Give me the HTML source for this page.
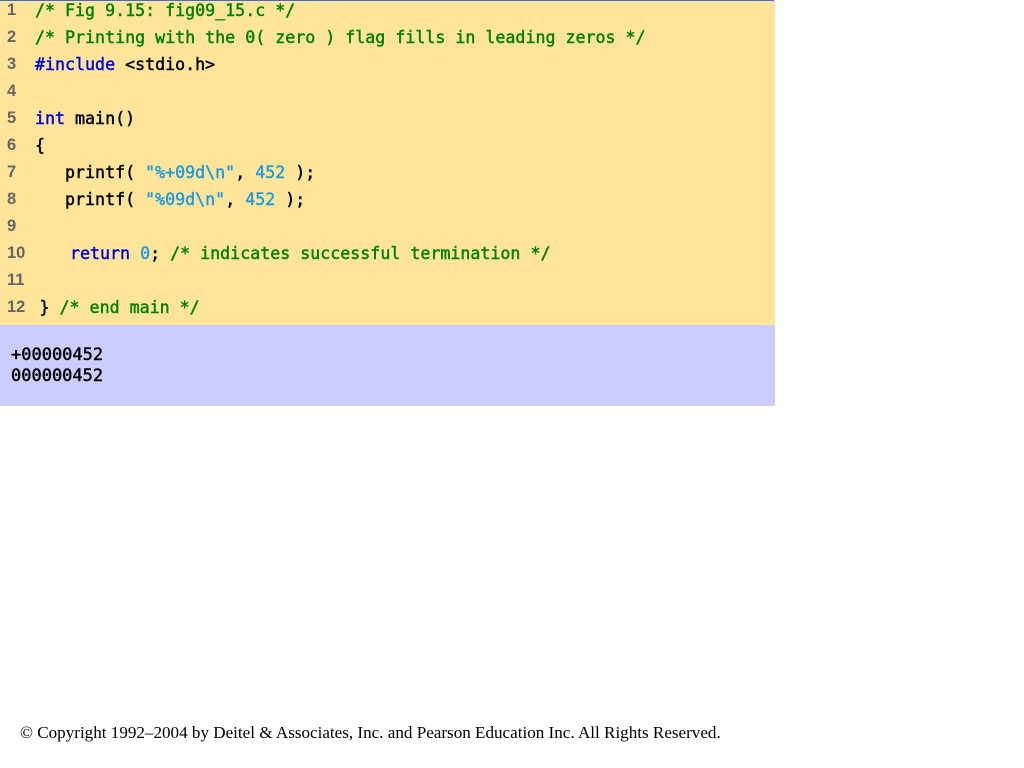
<!DOCTYPE html>
<html>
<head>
<meta charset="utf-8">
<style>
html,body{margin:0;padding:0;background:#fff;width:1024px;height:768px;overflow:hidden}
#code{position:absolute;left:0;top:0;width:775px;height:325px;background:#ffe599}
#bar{position:absolute;left:0;top:0;width:774px;height:1px;background:#4a66d0}
#out{position:absolute;left:0;top:325px;width:775px;height:81px;background:#ccccff}
.l,.n,.o{position:absolute;white-space:pre}
.l{left:35px;font:16.64px/27px "DejaVu Sans Mono",monospace;color:#000;-webkit-text-stroke:.45px currentColor}
.n{left:7px;font:bold 16.5px/27px "Liberation Sans",sans-serif;color:#666}
.o{left:11px;font:17px/21px "DejaVu Sans Mono",monospace;color:#000;-webkit-text-stroke:.45px currentColor}
.c{color:#008000}.k{color:#0000e0}.s{color:#1f9be0}
#f{position:absolute;left:20px;top:723px;font:17.09px/20px "Liberation Serif",serif;color:#000;white-space:pre}
</style>
</head>
<body>
<div id="code"></div><div id="bar"></div><div id="out"></div>
<div class="n" style="top:-3px">1</div><div class="l" style="top:-3px"><span class="c">/* Fig 9.15: fig09_15.c */</span></div>
<div class="n" style="top:24px">2</div><div class="l" style="top:24px"><span class="c">/* Printing with the 0( zero ) flag fills in leading zeros */</span></div>
<div class="n" style="top:51px">3</div><div class="l" style="top:51px"><span class="k">#include</span> &lt;stdio.h&gt;</div>
<div class="n" style="top:78px">4</div>
<div class="n" style="top:105px">5</div><div class="l" style="top:105px"><span class="k">int</span> main()</div>
<div class="n" style="top:132px">6</div><div class="l" style="top:132px">{</div>
<div class="n" style="top:159px">7</div><div class="l" style="top:159px">   printf( <span class="s">"%+09d\n"</span>, <span class="s">452</span> );</div>
<div class="n" style="top:186px">8</div><div class="l" style="top:186px">   printf( <span class="s">"%09d\n"</span>, <span class="s">452</span> );</div>
<div class="n" style="top:213px">9</div>
<div class="n" style="top:240px">10</div><div class="l" style="top:240px;left:70px"><span class="k">return</span> <span class="s">0</span>; <span class="c">/* indicates successful termination */</span></div>
<div class="n" style="top:267px">11</div>
<div class="n" style="top:294px">12</div><div class="l" style="top:294px;left:39.5px">} <span class="c">/* end main */</span></div>
<div class="o" style="top:345px">+00000452</div>
<div class="o" style="top:366px">000000452</div>
<div id="f">© Copyright 1992–2004 by Deitel &amp; Associates, Inc. and Pearson Education Inc. All Rights Reserved.</div>
</body>
</html>
